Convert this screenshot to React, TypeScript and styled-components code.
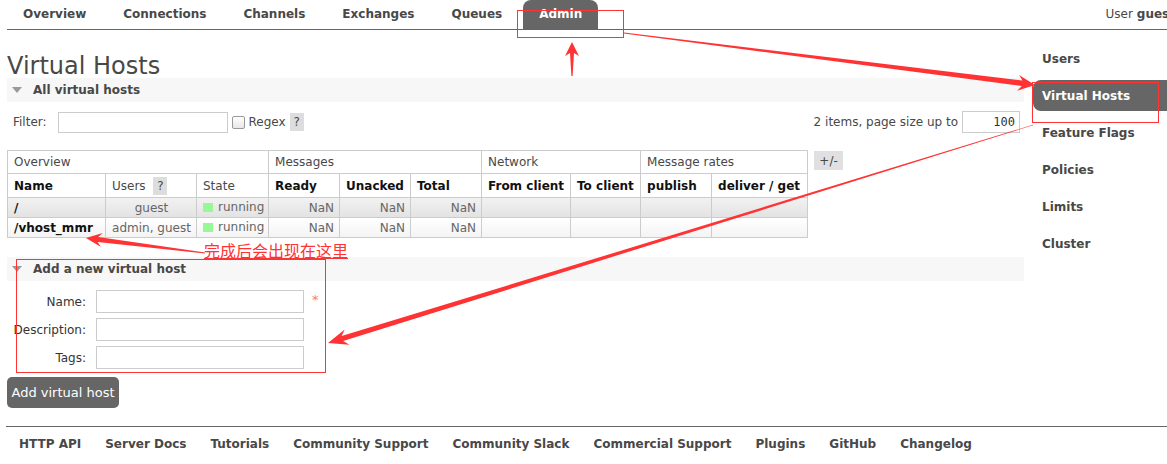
import React from "react";
import styled, { createGlobalStyle } from "styled-components";

const GlobalStyle = createGlobalStyle`
  html, body { margin: 0; padding: 0; background: #fff; }
  body {
    font-family: "DejaVu Sans", Verdana, sans-serif;
    font-size: 12px;
    color: #484848;
  }
  * { box-sizing: border-box; }
`;

const RED = "#ff3333";

const Page = styled.div`
  position: relative;
  width: 1167px;
  height: 464px;
  overflow: hidden;
`;

const Header = styled.header`
  display: flex;
  justify-content: space-between;
  align-items: flex-end;
  margin-left: 7px;
  width: 1168px;
  height: 30px;
  border-bottom: 1px solid #666;
`;

const Nav = styled.nav`
  display: flex;
  gap: 5px;
  height: 29px;
`;

const NavItem = styled.a<{ $active?: boolean }>`
  display: flex;
  align-items: center;
  height: 29px;
  padding: 0 16px 1px;
  font-weight: bold;
  font-size: 12px;
  text-decoration: none;
  color: ${(p) => (p.$active ? "#fff" : "#484848")};
  background: ${(p) => (p.$active ? "#666" : "transparent")};
  border-radius: 8px 8px 0 0;
`;

const UserInfo = styled.div`
  height: 29px;
  display: flex;
  align-items: center;
  padding-bottom: 1px;
  gap: 4px;
  color: #484848;
  b { font-weight: bold; }
`;

const Main = styled.div`
  display: flex;
  align-items: flex-start;
`;

const Content = styled.main`
  flex: 0 0 1017px;
  margin-left: 7px;
  width: 1017px;
`;

const Title = styled.h1`
  margin: 0;
  height: 48px;
  padding-top: 24px;
  font-size: 24px;
  line-height: 24px;
  font-weight: normal;
  color: #484848;
`;

const SectionBar = styled.div`
  display: flex;
  align-items: center;
  gap: 11px;
  height: 24px;
  padding-left: 5px;
  background: #f7f7f7;
  font-weight: bold;
  font-size: 12px;
  color: #484848;
`;

const Triangle = styled.span`
  width: 0;
  height: 0;
  border-left: 5px solid transparent;
  border-right: 5px solid transparent;
  border-top: 6px solid #999;
`;

const FilterRow = styled.div`
  display: flex;
  justify-content: space-between;
  align-items: center;
  margin-top: 9px;
  height: 22px;
  padding: 0 4px 0 6px;
`;

const Group = styled.div<{ $gap?: number }>`
  display: flex;
  align-items: center;
`;

const TextInput = styled.input<{ $w: number; $h?: number }>`
  width: ${(p) => p.$w}px;
  height: ${(p) => p.$h ?? 22}px;
  border: 1px solid #ccc;
  background: #fff;
  margin: 0;
  padding: 0 4px;
  font-family: "DejaVu Sans", Verdana, sans-serif;
  font-size: 12px;
  color: #333;
  outline: none;
`;

const FilterInput = styled(TextInput)`
  margin-left: 11px;
`;

const SizeInput = styled(TextInput)`
  margin-left: 4px;
  text-align: right;
  font-family: "DejaVu Sans Mono", monospace;
`;

const Check = styled.span`
  width: 13px;
  height: 13px;
  border: 1px solid #999;
  border-radius: 2px;
  background: linear-gradient(#fff, #e8e8e8);
  margin: 0 4px 0 4px;
`;

const Help = styled.span`
  display: inline-flex;
  align-items: center;
  justify-content: center;
  width: 14px;
  height: 18px;
  background: #ddd;
  color: #484848;
  font-weight: normal;
  margin-left: 4px;
`;

const TableRow = styled.div`
  display: flex;
  align-items: flex-start;
  gap: 6px;
  margin-top: 17px;
`;

const Table = styled.table`
  border-collapse: collapse;
  table-layout: fixed;
  width: 800px;
`;

const Col = styled.col<{ $w: number }>`
  width: ${(p) => p.$w}px;
`;

const GroupTh = styled.th`
  height: 23px;
  border: 1px solid #ccc;
  padding: 0 6px;
  text-align: left;
  font-weight: normal;
  color: #484848;
  background: #fff;
`;

const ColTh = styled.th<{ $plain?: boolean }>`
  height: 24px;
  border: 1px solid #ccc;
  padding: 0 6px;
  text-align: left;
  white-space: nowrap;
  font-weight: ${(p) => (p.$plain ? "normal" : "bold")};
  color: ${(p) => (p.$plain ? "#484848" : "#111")};
  background: #fff;
`;

const Tr = styled.tr<{ $alt: 1 | 2 }>`
  background: ${(p) =>
    p.$alt === 1
      ? "linear-gradient(#f2f2f2, #e2e2e2)"
      : "linear-gradient(#ffffff, #f3f3f3)"};
`;

const Td = styled.td<{ $align?: "left" | "center" | "right"; $strong?: boolean }>`
  height: 20px;
  border: 1px solid #ccc;
  padding: 0 5px 0 6px;
  white-space: nowrap;
  text-align: ${(p) => p.$align ?? "left"};
  font-weight: ${(p) => (p.$strong ? "bold" : "normal")};
  color: ${(p) => (p.$strong ? "#111" : "#666")};
`;

const StateBox = styled.span`
  display: inline-flex;
  align-items: center;
  gap: 5px;
  &::before {
    content: "";
    width: 10px;
    height: 9px;
    background: #98f898;
  }
`;

const ToggleBtn = styled.span`
  display: flex;
  align-items: center;
  justify-content: center;
  width: 29px;
  height: 19px;
  margin-top: 1px;
  background: #e0e0e0;
  color: #484848;
`;

const AddSection = styled.div`
  margin-top: 19px;
`;

const Form = styled.div`
  display: grid;
  grid-template-columns: 79px 208px auto;
  column-gap: 10px;
  row-gap: 5px;
  margin-top: 9px;
  align-items: center;
`;

const Label = styled.label`
  text-align: right;
  color: #333;
`;

const Required = styled.span`
  color: #f77;
  font-size: 13px;
  align-self: start;
  margin: 2px 0 0 -2px;
`;

const Button = styled.button`
  display: block;
  margin-top: 8px;
  width: 112px;
  height: 31px;
  border: none;
  border-radius: 5px;
  background: #666;
  color: #fff;
  font-family: "DejaVu Sans", Verdana, sans-serif;
  font-size: 13px;
  padding: 0;
`;

const Sidebar = styled.aside`
  flex: 0 0 140px;
  display: flex;
  flex-direction: column;
  gap: 6px;
  margin-left: 9px;
  width: 140px;
  padding-top: 13px;
`;

const SideItem = styled.a<{ $active?: boolean }>`
  display: flex;
  align-items: center;
  height: 31px;
  padding-left: 9px;
  font-weight: bold;
  font-size: 12px;
  text-decoration: none;
  color: ${(p) => (p.$active ? "#fff" : "#484848")};
  background: ${(p) => (p.$active ? "#666" : "transparent")};
  border-radius: 8px 0 0 8px;
`;

const Footer = styled.footer`
  display: flex;
  gap: 24px;
  margin-top: 18px;
  margin-left: 6px;
  width: 1170px;
  border-top: 1px solid #666;
  padding: 10px 0 0 13px;
  line-height: 14px;
`;

const FooterLink = styled.a`
  font-weight: bold;
  font-size: 12px;
  color: #484848;
  text-decoration: none;
`;

const Overlay = styled.svg`
  position: absolute;
  left: 0;
  top: 0;
  pointer-events: none;
`;

const Note = styled.span`
  position: absolute;
  left: 204px;
  top: 241px;
  font-family: "Noto Sans CJK SC", sans-serif;
  font-size: 16px;
  line-height: 19px;
  color: ${RED};
  text-decoration: underline;
  text-underline-offset: 1px;
`;

type Pt = [number, number];

function arrowPoints(
  tail: Pt,
  tip: Pt,
  headLen: number,
  headHalf: number,
  shaftTip: number,
  shaftTail: number,
  notch = 4
): string {
  const dx = tip[0] - tail[0];
  const dy = tip[1] - tail[1];
  const len = Math.hypot(dx, dy);
  const ux = dx / len;
  const uy = dy / len;
  const nx = -uy;
  const ny = ux;
  const at = (d: number, w: number): Pt => [tail[0] + ux * d + nx * w, tail[1] + uy * d + ny * w];
  const base = len - headLen;
  const neck = base + notch;
  const pts = [
    at(0, shaftTail),
    at(neck, shaftTip),
    at(base, headHalf),
    at(len, 0),
    at(base, -headHalf),
    at(neck, -shaftTip),
    at(0, -shaftTail),
  ];
  return pts.map((p) => p.map((v) => v.toFixed(1)).join(",")).join(" ");
}

const navItems = ["Overview", "Connections", "Channels", "Exchanges", "Queues", "Admin"];
const sideItems = ["Users", "Virtual Hosts", "Feature Flags", "Policies", "Limits", "Cluster"];
const footerLinks = [
  "HTTP API",
  "Server Docs",
  "Tutorials",
  "Community Support",
  "Community Slack",
  "Commercial Support",
  "Plugins",
  "GitHub",
  "Changelog",
];

const vhosts = [
  { name: "/", users: "guest" },
  { name: "/vhost_mmr", users: "admin, guest" },
];

export default function App() {
  return (
    <Page>
      <GlobalStyle />
      <Header>
        <Nav>
          {navItems.map((n) => (
            <NavItem key={n} $active={n === "Admin"}>
              {n}
            </NavItem>
          ))}
        </Nav>
        <UserInfo>
          <span>User</span>
          <b>guest</b>
        </UserInfo>
      </Header>
      <Main>
        <Content>
          <Title>Virtual Hosts</Title>
          <SectionBar>
            <Triangle />
            All virtual hosts
          </SectionBar>
          <FilterRow>
            <Group>
              <span>Filter:</span>
              <FilterInput $w={170} $h={21} />
              <Check />
              <span>Regex</span>
              <Help>?</Help>
            </Group>
            <Group>
              <span>2 items, page size up to</span>
              <SizeInput $w={58} defaultValue="100" />
            </Group>
          </FilterRow>
          <TableRow>
            <Table>
              <colgroup>
                {[98, 91, 72, 71, 71, 71, 89, 70, 71, 96].map((w, i) => (
                  <Col key={i} $w={w} />
                ))}
              </colgroup>
              <thead>
                <tr>
                  <GroupTh colSpan={3}>Overview</GroupTh>
                  <GroupTh colSpan={3}>Messages</GroupTh>
                  <GroupTh colSpan={2}>Network</GroupTh>
                  <GroupTh colSpan={2}>Message rates</GroupTh>
                </tr>
                <tr>
                  <ColTh>Name</ColTh>
                  <ColTh $plain>
                    Users <Help>?</Help>
                  </ColTh>
                  <ColTh $plain>State</ColTh>
                  <ColTh>Ready</ColTh>
                  <ColTh>Unacked</ColTh>
                  <ColTh>Total</ColTh>
                  <ColTh>From client</ColTh>
                  <ColTh>To client</ColTh>
                  <ColTh>publish</ColTh>
                  <ColTh>deliver / get</ColTh>
                </tr>
              </thead>
              <tbody>
                {vhosts.map((v, i) => (
                  <Tr key={v.name} $alt={i === 0 ? 1 : 2}>
                    <Td $strong>{v.name}</Td>
                    <Td $align="center">{v.users}</Td>
                    <Td>
                      <StateBox>running</StateBox>
                    </Td>
                    <Td $align="right">NaN</Td>
                    <Td $align="right">NaN</Td>
                    <Td $align="right">NaN</Td>
                    <Td />
                    <Td />
                    <Td />
                    <Td />
                  </Tr>
                ))}
              </tbody>
            </Table>
            <ToggleBtn>+/-</ToggleBtn>
          </TableRow>
          <AddSection>
            <SectionBar>
              <Triangle />
              Add a new virtual host
            </SectionBar>
            <Form>
              <Label>Name:</Label>
              <TextInput $w={208} $h={23} />
              <Required>*</Required>
              <Label>Description:</Label>
              <TextInput $w={208} $h={23} />
              <span />
              <Label>Tags:</Label>
              <TextInput $w={208} $h={23} />
              <span />
            </Form>
            <Button>Add virtual host</Button>
          </AddSection>
        </Content>
        <Sidebar>
          {sideItems.map((s) => (
            <SideItem key={s} $active={s === "Virtual Hosts"}>
              {s}
            </SideItem>
          ))}
        </Sidebar>
      </Main>
      <Footer>
        {footerLinks.map((f) => (
          <FooterLink key={f}>{f}</FooterLink>
        ))}
      </Footer>

      <Note>完成后会出现在这里</Note>
      <Overlay width="1167" height="464" viewBox="0 0 1167 464">
        <rect x="517.5" y="10.5" width="106" height="27" fill="none" stroke={RED} strokeWidth="1" />
        <rect x="1032.5" y="82.5" width="126" height="40" fill="none" stroke={RED} strokeWidth="1" />
        <rect x="16.5" y="259.5" width="309" height="113" fill="none" stroke={RED} strokeWidth="1" />
        <polygon fill={RED} points={arrowPoints([572, 76], [572, 42], 14, 7, 2, 0.6, 3)} />
        <polygon fill={RED} points={arrowPoints([624, 33], [1035, 85], 17, 8, 2.8, 0.4, 4)} />
        <polygon fill={RED} points={arrowPoints([205, 253], [86, 238], 16, 7, 2.5, 0.5, 4)} />
        <polygon fill={RED} points={arrowPoints([1033, 125], [328, 343], 20, 8, 2.6, 0.2, 5)} />
      </Overlay>
    </Page>
  );
}
